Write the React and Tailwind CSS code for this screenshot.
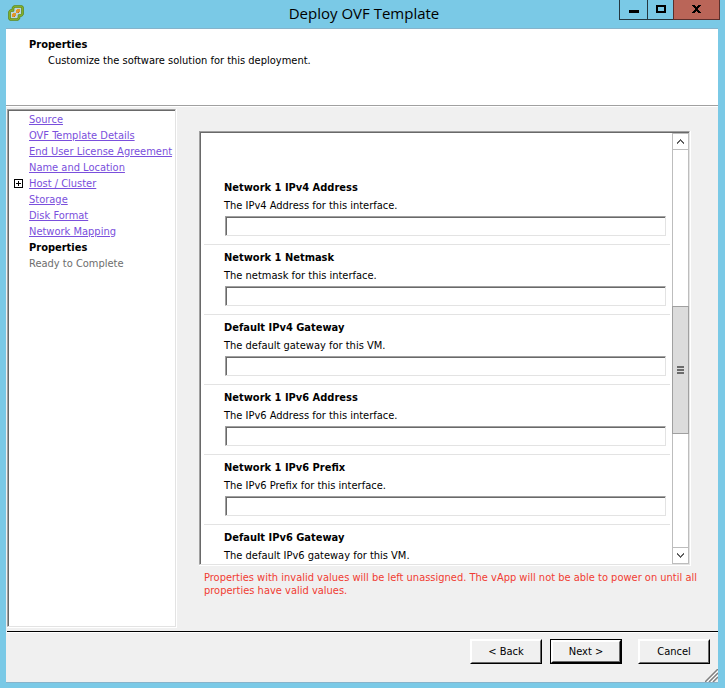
const steps = [
  'Source',
  'OVF Template Details',
  'End User License Agreement',
  'Name and Location',
  'Host / Cluster',
  'Storage',
  'Disk Format',
  'Network Mapping',
];

const properties = [
  { id: 'ipv4-address', name: 'Network 1 IPv4 Address', description: 'The IPv4 Address for this interface.' },
  { id: 'netmask', name: 'Network 1 Netmask', description: 'The netmask for this interface.' },
  { id: 'ipv4-gateway', name: 'Default IPv4 Gateway', description: 'The default gateway for this VM.' },
  { id: 'ipv6-address', name: 'Network 1 IPv6 Address', description: 'The IPv6 Address for this interface.' },
  { id: 'ipv6-prefix', name: 'Network 1 IPv6 Prefix', description: 'The IPv6 Prefix for this interface.' },
  { id: 'ipv6-gateway', name: 'Default IPv6 Gateway', description: 'The default IPv6 gateway for this VM.' },
];

function AppIcon() {
  return (
    <svg width="16" height="16" viewBox="0 0 16 16" fill="none" aria-hidden="true">
      <path d="M6.500 1.500h7l1 1v6.500l-1.200 1.500h-2.300v2.500L9.500 14.500H2.500l-1-1V7L2.700 5.500H5V3z" fill="#b9d6df" stroke="#56801c" strokeWidth="2.600" strokeLinejoin="round" />
      <path d="M6.500 1.500h7l1 1v6.500l-1.200 1.500h-2.300v2.500L9.500 14.500H2.500l-1-1V7L2.700 5.500H5V3z" stroke="#84b02a" strokeWidth="1.400" strokeLinejoin="round" />
      <path d="M8 4h4v3h-1v1H8zM4 8h4v3H7v1H4z" fill="#e0962b" />
      <path d="M8 4h1v1H8zM4 8h1v1H4z" fill="#f3cf8e" />
      <path d="M10 7h1v1h-1zM6 11h1v1H6z" fill="#b5701c" />
    </svg>
  );
}

function TitleBar() {
  return (
    <header className="grid h-7 shrink-0 grid-cols-[1fr_auto_1fr] items-start pl-2 pr-[5px]">
      <div className="pt-[5px]">
        <AppIcon />
      </div>
      <h1 className="font-['Open_Sans','Noto_Sans',sans-serif] text-[15px] leading-[26px] text-black">Deploy OVF Template</h1>
      <div className="flex justify-end">
        <button type="button" aria-label="Minimize" className="flex h-5 w-7 items-center justify-center border-b border-l border-[#243740]">
          <svg width="10" height="9" viewBox="0 0 10 9" shapeRendering="crispEdges"><path d="M0 5h10v3H0z" /></svg>
        </button>
        <button type="button" aria-label="Maximize" className="flex h-5 w-[26px] items-center justify-center border-b border-l border-[#243740]">
          <svg width="10" height="9" viewBox="0 0 10 9" shapeRendering="crispEdges"><path d="M0 0h10v8H0zM2 2v4h6V2z" fillRule="evenodd" /></svg>
        </button>
        <button type="button" aria-label="Close" className="flex h-5 w-[47px] items-center justify-center border-x border-b border-[#5a2f2c] bg-[#ba6558]">
          <svg width="9" height="9" viewBox="0 0 9 9" shapeRendering="crispEdges">
            <path d="M0 0h3v1h1v1h1V1h1V0h3v1H8v1H7v1H6v2h1v1h1v1h1v1H6V7H5V6H4v1H3v1H0V7h1V6h1V5h1V3H2V2H1V1H0z" />
          </svg>
        </button>
      </div>
    </header>
  );
}

function StepList() {
  return (
    <nav aria-label="Wizard steps" className="flex w-[170px] shrink-0 border-b border-r border-white">
      <div className="w-full border border-b-[#e3e3e3] border-l-[#a0a0a0] border-r-[#e3e3e3] border-t-[#a0a0a0]">
        <ul className="h-full border-l border-t border-[#696969] bg-white pt-px leading-4">
          {steps.map((step) => (
            <li key={step} className="flex h-4 items-start">
              <span className="flex w-5 shrink-0 pl-[5px] pt-[3px]">
                {step === 'Host / Cluster' && (
                  <button type="button" aria-label="Expand Host / Cluster" className="flex size-[9px]">
                    <svg width="9" height="9" viewBox="0 0 9 9" shapeRendering="crispEdges">
                      <path d="M0 0h9v9H0zM1 1v7h7V1z" fillRule="evenodd" />
                      <path d="M2 4h5v1H2zM4 2h1v5H4z" />
                    </svg>
                  </button>
                )}
              </span>
              <a href="#" className="whitespace-nowrap text-[#7a4fdc] underline underline-offset-1">{step}</a>
            </li>
          ))}
          <li className="h-4 pl-5 font-bold" aria-current="step">Properties</li>
          <li className="h-4 pl-5 text-[#6d6d6d]">Ready to Complete</li>
        </ul>
      </div>
    </nav>
  );
}

function PropertyField({ id, name, description }) {
  return (
    <div className="border-b border-[#e3e3e3] pb-2 pl-5 pr-1 pt-1">
      <label htmlFor={id} className="block font-bold leading-[18px]">{name}</label>
      <p id={id + '-hint'} className="leading-[18px]">{description}</p>
      <div className="ml-px mt-px h-5 border border-b-[#e3e3e3] border-l-[#a0a0a0] border-r-[#e3e3e3] border-t-[#a0a0a0]">
        <input id={id} type="text" aria-describedby={id + '-hint'} className="block h-full w-full border-l border-t border-[#696969] bg-white px-1 outline-none" />
      </div>
    </div>
  );
}

function ScrollBar() {
  return (
    <div className="flex w-[17px] shrink-0 flex-col border border-[#bdbdbd] bg-white">
      <button type="button" aria-label="Scroll up" className="flex h-4 shrink-0 items-center justify-center border-b border-[#bdbdbd]">
        <svg width="7" height="5" viewBox="0 0 7 5" shapeRendering="crispEdges"><path d="M3 0h1v1h1v1h1v1h1v2H6V4H5V3H4V2H3v1H2v1H1v1H0V3h1V2h1V1h1z" fill="#606060" /></svg>
      </button>
      <div className="flex flex-1 flex-col">
        <div className="grow-[156]" />
        <div className="-mx-px flex h-32 items-center justify-center border border-[#a0a0a0] bg-[#dcdcdc]">
          <svg width="7" height="8" viewBox="0 0 7 8" shapeRendering="crispEdges"><path d="M0 0h7v2H0zM0 3h7v2H0zM0 6h7v2H0z" fill="#6b6b6b" /></svg>
        </div>
        <div className="grow-[113]" />
      </div>
      <button type="button" aria-label="Scroll down" className="flex h-4 shrink-0 items-center justify-center border-t border-[#bdbdbd]">
        <svg width="7" height="5" viewBox="0 0 7 5" shapeRendering="crispEdges"><path d="M3 5h1V4h1V3h1V2h1V0H6v1H5v1H4v1H3V2H2V1H1V0H0v2h1v1h1v1h1z" fill="#606060" /></svg>
      </button>
    </div>
  );
}

function PropertyPane() {
  return (
    <main className="flex min-w-0 flex-1 flex-col pb-[31px] pl-[22px] pr-[27px] pt-[22px]">
      <div className="flex min-h-0 flex-1 border-b border-r border-white">
        <div className="flex w-full border border-b-[#e3e3e3] border-l-[#a0a0a0] border-r-[#e3e3e3] border-t-[#a0a0a0]">
          <div className="flex min-w-0 flex-1 border-l border-t border-[#696969] bg-white">
            <div className="min-w-0 flex-1 overflow-hidden pl-[3px] pr-0.5 pt-[42px]">
              {properties.map((property) => (
                <PropertyField key={property.id} {...property} />
              ))}
            </div>
            <ScrollBar />
          </div>
        </div>
      </div>
      <p role="alert" className="-mr-5 mt-[5px] pl-[5px] leading-[13px] text-[#f03c32]">
        Properties with invalid values will be left unassigned. The vApp will not be able to power on until all properties have valid values.
      </p>
    </main>
  );
}

function DialogButton({ children, primary = false }) {
  return (
    <button type="button" className={primary ? 'h-[25px] w-[72px] border border-black' : 'h-[25px] w-[72px]'}>
      <span className="block h-full border border-b-black border-l-white border-r-black border-t-white">
        <span className="flex h-full items-center justify-center border border-b-[#696969] border-l-white border-r-[#696969] border-t-white bg-[#f0f0f0] pt-0.5">
          {children}
        </span>
      </span>
    </button>
  );
}

export default function App() {
  return (
    <div className="flex h-screen flex-col bg-[#7ac9e6] font-['DejaVu_Sans_Condensed','DejaVu_Sans',sans-serif] text-[11px] text-black">
      <TitleBar />
      <div className="mb-[5px] ml-1.5 mr-[7px] flex min-h-0 flex-1 flex-col border-y border-[#86b3cb] bg-[#f0f0f0]">
        <section className="h-[77px] shrink-0 border-b border-[#a0a0a0] bg-white pl-[23px] pt-2 leading-4">
          <h2 className="font-bold">Properties</h2>
          <p className="pl-[19px]">Customize the software solution for this deployment.</p>
        </section>
        <div className="flex min-h-0 flex-1 border-t border-white pb-[3px] pl-px pt-0.5">
          <StepList />
          <PropertyPane />
        </div>
        <footer className="ml-px flex h-[51px] shrink-0 items-start border-t border-black">
          <div className="flex h-full flex-1 items-start justify-end border-t border-white pt-1.5">
            <div className="flex gap-2">
              <DialogButton>&lt; Back</DialogButton>
              <DialogButton primary>Next &gt;</DialogButton>
            </div>
            <div className="flex pl-4">
              <DialogButton>Cancel</DialogButton>
            </div>
            <svg width="13" height="13" viewBox="0 0 13 13" className="-ml-[5px] self-end" aria-hidden="true">
              <path d="M0 13L13 0M4 13l9-9M8 13l5-5" stroke="#808080" strokeWidth="1.500" />
              <path d="M2 13L13 2M6 13l7-7" stroke="#fff" />
            </svg>
          </div>
        </footer>
      </div>
    </div>
  );
}
